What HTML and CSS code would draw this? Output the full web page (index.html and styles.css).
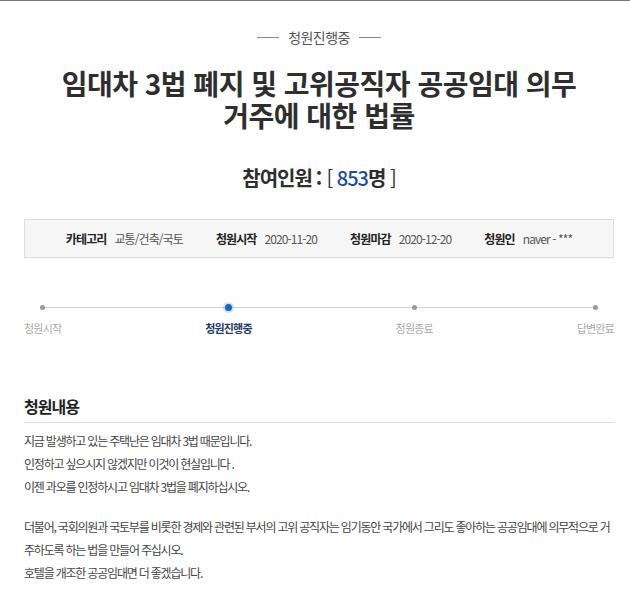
FILE: index.html
```html
<!DOCTYPE html>
<html lang="ko">
<head>
<meta charset="utf-8">
<title>청원</title>
<link rel="stylesheet" href="styles.css">
</head>
<body>
<div class="page">
  <div class="status"><span class="dash"></span><span class="status-text">청원진행중</span><span class="dash"></span></div>
  <h1 class="title">임대차 3법 폐지 및 고위공직자 공공임대 의무 거주에 대한 법률</h1>
  <div class="count"><b>참여인원</b><b class="colon">:</b><span class="br">[</span> <span class="num">853</span><b>명</b> <span class="br">]</span></div>

  <div class="info">
    <div class="info-item"><span class="info-label">카테고리</span><span class="info-value">교통/건축/국토</span></div>
    <div class="info-item"><span class="info-label">청원시작</span><span class="info-value">2020-11-20</span></div>
    <div class="info-item"><span class="info-label">청원마감</span><span class="info-value">2020-12-20</span></div>
    <div class="info-item"><span class="info-label">청원인</span><span class="info-value">naver - ***</span></div>
  </div>

  <div class="steps">
    <div class="step"><div class="dot-wrap"><span class="dot"></span></div><span class="step-label">청원시작</span></div>
    <div class="step active"><div class="dot-wrap"><span class="dot"></span></div><span class="step-label">청원진행중</span></div>
    <div class="step"><div class="dot-wrap"><span class="dot"></span></div><span class="step-label">청원종료</span></div>
    <div class="step"><div class="dot-wrap"><span class="dot"></span></div><span class="step-label">답변완료</span></div>
  </div>

  <h2 class="section-title">청원내용</h2>
  <div class="content">
    <p>지금 발생하고 있는 주택난은 임대차 3법 때문입니다.<br>인정하고 싶으시지 않겠지만 이것이 현실입니다 .<br>이젠 과오를 인정하시고 임대차 3법을 폐지하십시오.</p>
    <p>더불어, 국회의원과 국토부를 비롯한 경제와 관련된 부서의 고위 공직자는 임기동안 국가에서 그리도 좋아하는 공공임대에 의무적으로 거주하도록 하는 법을 만들어 주십시오.<br>호텔을 개조한 공공임대면 더 좋겠습니다.</p>
  </div>
</div>
</body>
</html>
```

FILE: styles.css
```css
html, body {
  margin: 0;
  padding: 0;
  background: #ffffff;
}

body {
  border-top: 1px solid #7a7a7a;
  font-family: "Noto Sans CJK KR", "Noto Sans", sans-serif;
  color: #333;
}

.page {
  padding: 0 16px 0 24px;
}

.status {
  margin-top: 26px;
  height: 20px;
  display: flex;
  align-items: center;
  justify-content: center;
  gap: 9px;
  font-size: 14px;
  letter-spacing: -0.6px;
  color: #555;
}

.dash {
  width: 22px;
  height: 1px;
  background: #888;
}

.title {
  margin: 20px 0 0;
  padding: 0 20px;
  text-align: center;
  font-size: 28px;
  line-height: 32px;
  font-weight: 700;
  letter-spacing: -0.5px;
  word-break: keep-all;
  color: #2e2e2e;
}

.count {
  margin-top: 33px;
  height: 28px;
  line-height: 28px;
  text-align: center;
  font-size: 20px;
  letter-spacing: -1px;
  color: #2e2e2e;
}

.count b {
  font-weight: 700;
}

.count .colon {
  margin: 0 5px 0 4px;
}

.count .br {
  font-weight: 400;
}

.count .num {
  color: #1b4f9b;
  font-weight: 500;
}

.info {
  margin-top: 27px;
  height: 37px;
  display: flex;
  align-items: center;
  justify-content: center;
  gap: 33px;
  background: #f6f6f6;
  border: 1px solid #dedede;
  box-shadow: 0 1px 1px rgba(0, 0, 0, 0.04);
  font-size: 12px;
  letter-spacing: -0.9px;
}

.info-label {
  font-weight: 700;
  color: #222;
  margin-right: 8px;
}

.info-value {
  color: #555;
}

.steps {
  position: relative;
  margin-top: 45px;
  display: flex;
  justify-content: space-between;
}

.steps::before {
  content: "";
  position: absolute;
  left: 19px;
  right: 17px;
  top: 4px;
  height: 1px;
  background: #cfcfcf;
}

.step {
  display: flex;
  flex-direction: column;
  align-items: center;
  gap: 9px;
}

.dot-wrap {
  height: 8px;
  display: flex;
  align-items: center;
  justify-content: center;
  position: relative;
}

.dot {
  width: 5px;
  height: 5px;
  border-radius: 50%;
  background: #9a9a9a;
}

.step.active .dot {
  width: 7px;
  height: 7px;
  background: #1565d8;
  box-shadow: 0 0 0 2px rgba(21, 101, 216, 0.18);
}

.step-label {
  font-size: 11px;
  line-height: 16px;
  letter-spacing: -0.8px;
  color: #aaa;
}

.step.active .step-label {
  color: #1d3c68;
  font-weight: 700;
}

.section-title {
  margin: 59px 0 0;
  padding-bottom: 5px;
  border-bottom: 1px solid #dcdcdc;
  font-size: 16px;
  line-height: 22px;
  font-weight: 700;
  letter-spacing: -1px;
  color: #222;
}

.content {
  margin-top: 6px;
  font-size: 12px;
  line-height: 23px;
  letter-spacing: -1.2px;
  color: #444;
}

.content p {
  margin: 0 0 17px;
}
```
